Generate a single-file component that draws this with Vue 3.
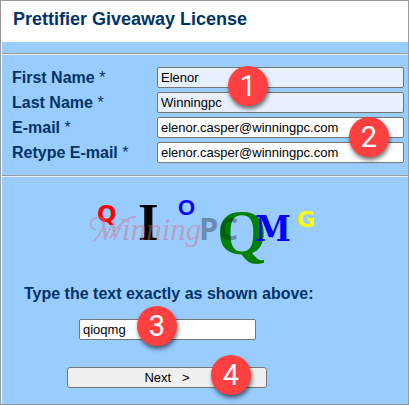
<script setup>
import { ref } from 'vue'

const fields = ref([
  { id: 'first', label: 'First Name', value: 'Elenor', type: 'text', filled: true },
  { id: 'last', label: 'Last Name', value: 'Winningpc', type: 'text', filled: true },
  { id: 'email', label: 'E-mail', value: 'elenor.casper@winningpc.com', type: 'email', filled: false },
  { id: 'retype', label: 'Retype E-mail', value: 'elenor.casper@winningpc.com', type: 'email', filled: false },
])
const captcha = ref('qioqmg')
</script>

<template>
  <main class="page">
    <header class="header">
      <h1>Prettifier Giveaway License</h1>
    </header>
    <form class="form" @submit.prevent>
      <hr class="rule" />
      <section class="fields">
        <div v-for="f in fields" :key="f.id" class="row">
          <label :for="f.id">{{ f.label }} <span class="star">*</span></label>
          <input :id="f.id" v-model="f.value" :type="f.type" :class="{ filled: f.filled }" />
        </div>
        <span class="badge one">1</span>
        <span class="badge two">2</span>
      </section>
      <hr class="rule" />
      <section class="check">
        <svg class="captcha" width="240" height="80" viewBox="85 190 240 80" role="img" aria-label="Verification letters">
          <text class="sans" x="97" y="222" font-size="23" fill="#f00">Q</text>
          <text class="serif" x="138" y="240" font-size="53" fill="#000">I</text>
          <text class="arial" x="178" y="215" font-size="22" fill="#00f">O</text>
          <text class="serif" x="217" y="254" font-size="64" fill="#008000">Q</text>
          <text class="slab" x="255" y="241" font-size="36" fill="#00f">M</text>
          <text class="sans" x="297" y="227" font-size="22" fill="#ff0">G</text>
          <g opacity="0.45">
            <text class="script" x="98" y="240" font-size="31" fill="#d8707c">Winning</text>
            <path d="M96 230C86 228 91 214 102 218C109 221 100 235 94 241M110 238Q124 216 136 217" fill="none" stroke="#d8707c" stroke-width="1.5" />
          </g>
          <text class="mark" x="199" y="240" font-size="31" fill="#102030" opacity="0.36">PC</text>
        </svg>
        <label class="prompt" for="captcha">Type the text exactly as shown above:</label>
        <div class="answer">
          <input id="captcha" v-model="captcha" type="text" />
          <span class="badge three">3</span>
        </div>
        <div class="submit">
          <button type="submit">Next &nbsp; &gt;</button>
          <span class="badge four">4</span>
        </div>
      </section>
    </form>
  </main>
</template>

<style>
body {
  background: #fff;
}
</style>

<style scoped>
.page {
  border: 1px solid #999;
  padding-left: 1px;
  background: #fff;
  color: #036;
  font-family: "Liberation Sans", Arial, sans-serif;
  font-size: 16px;
}
.header {
  padding: 8px 11px 13px;
}
h1 {
  margin: 0;
  font-size: 18px;
  line-height: 20px;
}
.form {
  background: #9cf;
  padding-top: 11px;
}
.rule {
  margin: 0;
  border: 0;
  border-top: 1px solid #999;
  border-bottom: 1px solid #eee;
}
.fields {
  position: relative;
  display: grid;
  gap: 4px;
  padding: 12px 4px 12px 10px;
}
.row {
  display: grid;
  grid-template-columns: 145px 1fr;
  align-items: center;
}
label {
  font-weight: bold;
  line-height: 20px;
}
.star {
  font-size: 16px;
  font-weight: normal;
}
input {
  box-sizing: border-box;
  width: 100%;
  height: 21px;
  margin: 0;
  padding: 1px 3px;
  border: 1px solid #767676;
  border-radius: 2px;
  background: #fff;
  color: #000;
  font: 13px "Liberation Sans", Arial, sans-serif;
}
.filled {
  background: #e8f0fe;
}
.check {
  display: flex;
  flex-direction: column;
  align-items: flex-start;
  padding: 13px 22px 16px;
}
.captcha {
  display: block;
  margin-left: 61px;
}
.captcha text {
  font-weight: bold;
}
.captcha .sans {
  font-family: "DejaVu Sans", sans-serif;
}
.captcha .arial {
  font-family: "Liberation Sans", sans-serif;
}
.captcha .serif {
  font-family: "Liberation Serif", serif;
}
.captcha .slab {
  font-family: "DejaVu Serif Condensed", "DejaVu Serif", serif;
}
.captcha .script {
  font-family: "Liberation Serif", serif;
  font-style: italic;
  font-weight: normal;
}
.captcha .mark {
  font-family: "Open Sans", sans-serif;
}
.prompt {
  margin-top: 14px;
}
.answer,
.submit {
  position: relative;
}
.answer {
  width: 177px;
  margin: 15px 0 27px 55px;
}
.answer input {
  display: block;
}
.submit {
  width: 200px;
  margin-left: 43px;
}
button {
  display: block;
  box-sizing: border-box;
  width: 100%;
  height: 21px;
  padding: 0;
  border: 1px solid #767676;
  border-radius: 3px;
  background: #efefef;
  color: #000;
  font: 13px "Liberation Sans", Arial, sans-serif;
}
.badge {
  position: absolute;
  width: 40px;
  height: 40px;
  border-radius: 50%;
  background: #ff4040;
  box-shadow: 1px 3px 4px rgba(0, 0, 0, 0.55);
  color: #fff;
  font-family: Roboto, sans-serif;
  font-size: 29px;
  line-height: 41px;
  text-align: center;
}
.one {
  left: 226px;
  top: 11px;
}
.two {
  right: 19px;
  top: 62px;
}
.three {
  left: 58px;
  top: -13px;
}
.four {
  left: 144px;
  top: -12px;
}
</style>
